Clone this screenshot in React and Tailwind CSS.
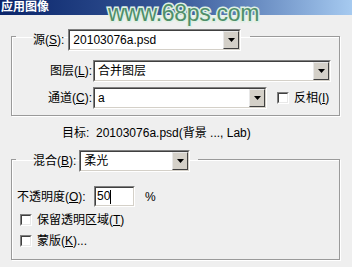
import React from "react";

const FONT = "font-['Liberation_Sans','Noto_Sans_CJK_SC',sans-serif]";

const Arrow = () => (
  <svg width="7" height="4" viewBox="0 0 7 4">
    <polygon points="0,0 7,0 3.5,4" fill="#000" />
  </svg>
);

const Combo = ({ w, value }) => (
  <div
    className={`flex h-[22px] ${w} border border-t-[#808080] border-l-[#808080] border-r-white border-b-white`}
  >
    <div className="flex flex-1 items-stretch border border-t-[#404040] border-l-[#404040] border-r-[#d4d0c8] border-b-[#d4d0c8] bg-white">
      <span className="flex-1 pl-[3px] leading-[18px] text-[12px] text-black">
        {value}
      </span>
      <div className="flex w-[16px] items-center justify-center border border-t-[#e8e8e8] border-l-[#e8e8e8] border-r-[#404040] border-b-[#404040] bg-[#d4d0c8]">
        <Arrow />
      </div>
    </div>
  </div>
);

const Check = () => (
  <div className="h-[12px] w-[12px] border border-t-[#808080] border-l-[#808080] border-r-white border-b-white">
    <div className="h-full w-full border border-t-[#404040] border-l-[#404040] border-r-[#e8e8e8] border-b-[#e8e8e8] bg-white" />
  </div>
);

const U = ({ children }) => <span className="underline">{children}</span>;

export default function App() {
  return (
    <div
      className={`relative h-[267px] w-[352px] overflow-hidden bg-[#efefef] text-[12px] text-black ${FONT}`}
    >
      {/* title bar */}
      <div className="flex h-[15px] items-center bg-gradient-to-r from-[#0a246a] via-[#3a5a9a] to-[#a6caf0] pl-[1px]">
        <span className="text-[12px] font-bold leading-[15px] text-white">
          应用图像
        </span>
      </div>

      {/* watermark */}
      <div className="absolute left-[108px] top-0 text-[23px] leading-[26px] tracking-[-0.3px] text-[#4f8f6a] [-webkit-text-stroke:3px_#dff0e4] [paint-order:stroke_fill] font-['Liberation_Sans',sans-serif]">
        www.68ps.com
      </div>

      {/* source */}
      <fieldset className="ml-[11px] mt-[6px] w-[329px] border border-[#9a9a9a] p-0 pb-[6px] shadow-[inset_1px_1px_0_#fff,1px_1px_0_#fff]">
        <legend className="ml-[4px] flex items-center pl-[17px] pr-[9px] pt-[8px]">
          <span className="mr-[4px] leading-[21px]">
            源(<U>S</U>):
          </span>
          <Combo w="w-[173px]" value="20103076a.psd" />
        </legend>
        <div className="mt-[9px] flex items-center">
          <span className="w-[81px] pr-[1px] text-right">
            图层(<U>L</U>):
          </span>
          <Combo w="w-[238px]" value="合并图层" />
        </div>
        <div className="mt-[5px] flex items-center">
          <span className="w-[81px] pr-[1px] text-right">
            通道(<U>C</U>):
          </span>
          <Combo w="w-[174px]" value="a" />
          <div className="ml-[10px]">
            <Check />
          </div>
          <span className="ml-[5px]">
            反相(<U>I</U>)
          </span>
        </div>
      </fieldset>

      {/* target */}
      <div className="ml-[62px] mt-[10px] h-[14px] leading-[14px]">
        目标:&nbsp; 20103076a.psd(背景 ..., Lab)
      </div>

      {/* blend */}
      <fieldset className="ml-[11px] mt-[6px] h-[114px] w-[329px] border border-[#9a9a9a] p-0 shadow-[inset_1px_1px_0_#fff,1px_1px_0_#fff]">
        <legend className="ml-[4px] flex items-center pl-[17px] pr-[8px] pt-[4px]">
          <span className="mr-[3px] leading-[21px]">
            混合(<U>B</U>):
          </span>
          <Combo w="w-[111px]" value="柔光" />
        </legend>
        <div className="mt-[14px] flex items-center pl-[5px]">
          <span className="w-[77px]">
            不透明度(<U>O</U>):
          </span>
          <div className="flex h-[21px] w-[41px] items-center border border-t-[#808080] border-l-[#808080] border-r-white border-b-white">
            <div className="flex h-full w-full items-center border border-t-[#404040] border-l-[#404040] border-r-[#d4d0c8] border-b-[#d4d0c8] bg-white pl-[1px]">
              <span className="leading-[15px]">50</span>
              <span className="h-[14px] w-[1px] bg-black" />
            </div>
          </div>
          <span className="ml-[10px]">%</span>
        </div>
        <div className="mt-[5px] flex items-center pl-[8px]">
          <Check />
          <span className="ml-[5px] leading-[16px]">
            保留透明区域(<U>T</U>)
          </span>
        </div>
        <div className="mt-[5px] flex items-center pl-[8px]">
          <Check />
          <span className="ml-[5px] leading-[16px]">
            蒙版(<U>K</U>)...
          </span>
        </div>
      </fieldset>
    </div>
  );
}
